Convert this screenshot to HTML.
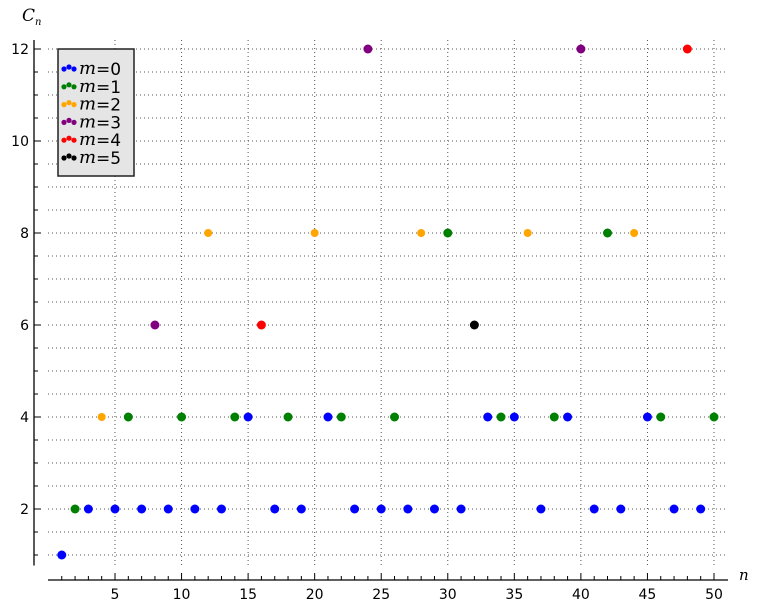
<!DOCTYPE html>
<html><head><meta charset="utf-8"><style>
html,body{margin:0;padding:0;background:#fff;}
svg{display:block;}
text{font-family:"DejaVu Sans","Liberation Sans",sans-serif;}
.it{font-family:"DejaVu Serif","Liberation Serif",serif;font-style:italic;}
</style></head><body>
<svg id="s" width="761" height="609" xmlns="http://www.w3.org/2000/svg"></svg>
<script>
var s=document.getElementById('s'),h='';
function X(n){return 115+(n-5)*13.311;}
function Y(c){return 509-(c-2)*46;}
for(var c=1;c<=12.01;c+=0.5){var y=Y(c);h+='<line x1="48" x2="727" y1="'+y+'" y2="'+y+'" stroke="#555" stroke-width="1" stroke-dasharray="1,3"/>';
h+='<line x1="34" x2="'+(c%2==0?41:38)+'" y1="'+y+'" y2="'+y+'" stroke="#000" stroke-width="1"/>';}
for(var n=5;n<=50;n+=5){var x=X(n);h+='<line x1="'+x+'" x2="'+x+'" y1="40" y2="566" stroke="#555" stroke-width="1" stroke-dasharray="1,3"/>';
h+='<text x="'+x+'" y="599" font-size="14" text-anchor="middle">'+n+'</text>';}
for(var n=1;n<=50;n++){var x=X(n);h+='<line x1="'+x+'" x2="'+x+'" y1="580" y2="'+(n%5==0?573:576)+'" stroke="#000"/>';}
for(var c=2;c<=12;c+=2){h+='<text x="29" y="'+(Y(c)+5)+'" font-size="14" text-anchor="end">'+c+'</text>';}
h+='<line x1="34" x2="34" y1="40" y2="565.5" stroke="#000" stroke-width="1.3"/>';
h+='<line x1="48" x2="728" y1="580" y2="580" stroke="#000" stroke-width="1.3"/>';
h+='<text class="it" x="22" y="21" font-size="17">C</text><text class="it" x="35" y="25" font-size="10">n</text>';
h+='<text class="it" x="739" y="580" font-size="15">n</text>';
var col=['#0000ff','#008000','#ffa500','#800080','#ff0000','#000000'];
var d=[
[[1,1],[3,2],[5,2],[7,2],[9,2],[11,2],[13,2],[17,2],[19,2],[23,2],[25,2],[27,2],[29,2],[31,2],[37,2],[41,2],[43,2],[47,2],[49,2],[15,4],[21,4],[33,4],[35,4],[39,4],[45,4]],
[[2,2],[6,4],[10,4],[14,4],[18,4],[22,4],[26,4],[34,4],[38,4],[46,4],[50,4],[30,8],[42,8]],
[[4,4],[12,8],[20,8],[28,8],[36,8],[44,8]],
[[8,6],[24,12],[40,12]],
[[16,6],[48,12]],
[[32,6]]];
for(var m=0;m<6;m++)for(var i=0;i<d[m].length;i++){var p=d[m][i];var r=(m==2)?4:4.5;h+='<circle cx="'+X(p[0])+'" cy="'+Y(p[1])+'" r="'+r+'" fill="'+col[m]+'"/>';}
h+='<rect x="58" y="49" width="76" height="127" fill="#e5e5e5" stroke="#222" stroke-width="1.5"/>';
for(var m=0;m<6;m++){var y=69+m*17.8;
h+='<circle cx="64" cy="'+y+'" r="2.6" fill="'+col[m]+'"/><circle cx="69" cy="'+(y-2)+'" r="2.6" fill="'+col[m]+'"/><circle cx="74" cy="'+y+'" r="2.6" fill="'+col[m]+'"/>';
h+='<text class="it" x="79" y="'+(y+5)+'" font-size="18">m</text><text x="96" y="'+(y+6)+'" font-size="17" font-family="DejaVu Serif,serif">='+m+'</text>';}
s.innerHTML=h;
</script>
</body></html>
